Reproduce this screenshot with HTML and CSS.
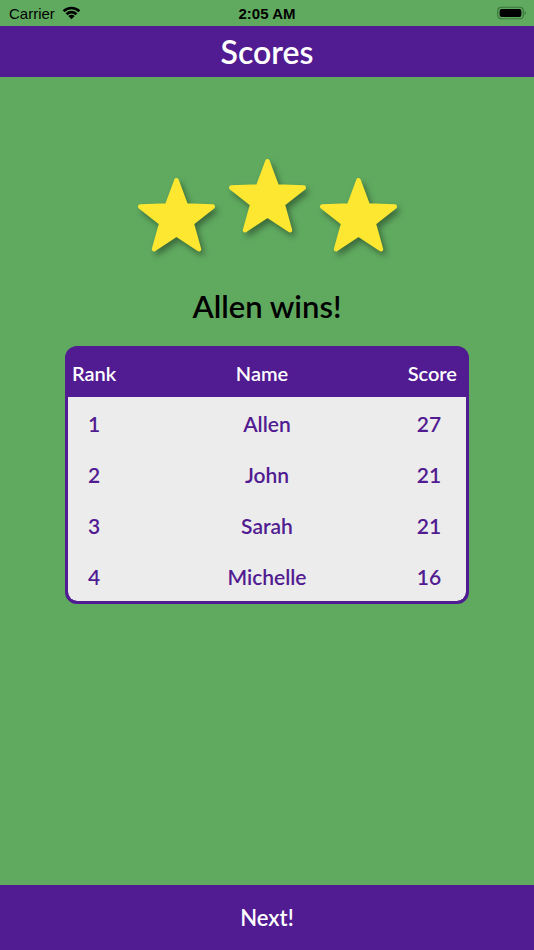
FILE: index.html
```html
<!DOCTYPE html>
<html>
<head>
<meta charset="utf-8">
<link rel="stylesheet" href="styles.css">
</head>
<body>
<div class="screen">
  <div class="status">
    <div class="status-left">
      <span class="carrier">Carrier</span>
      <svg class="wifi" width="21" height="15" viewBox="0 0 20 14">
        <path d="M10 13.4 L7 10.3 A4.3 4.3 0 0 1 13 10.3 Z" fill="#000"/>
        <path d="M4.4 7.7 A8 8 0 0 1 15.6 7.7 L13.8 9.5 A5.5 5.5 0 0 0 6.2 9.5 Z" fill="#000"/>
        <path d="M1.6 4.9 A12 12 0 0 1 18.4 4.9 L16.6 6.7 A9.4 9.4 0 0 0 3.4 6.7 Z" fill="#000"/>
      </svg>
    </div>
    <div class="time">2:05 AM</div>
    <div class="status-right">
      <svg class="battery" width="30" height="14" viewBox="0 0 30 14">
        <rect x="0.75" y="1.25" width="25.5" height="11.5" rx="3.5" fill="none" stroke="#1f4a1f" stroke-opacity="0.55" stroke-width="1.2"/>
        <rect x="2.6" y="3" width="21.8" height="8" rx="2" fill="#000"/>
        <path d="M27.6 5 Q29 5.3 29 7 Q29 8.7 27.6 9 Z" fill="#1f4a1f" fill-opacity="0.55"/>
      </svg>
    </div>
  </div>
  <div class="navbar">Scores</div>
  <div class="content">
    <div class="stars">
      <svg class="star side" viewBox="-0.55 -1 101.1 96.45"><polygon points="50,2 62.34,35.01 97.55,36.55 69.97,58.49 79.39,92.45 50,73 20.61,92.45 30.03,58.49 2.45,36.55 37.66,35.01"/></svg>
      <svg class="star" viewBox="-0.55 -1 101.1 96.45"><polygon points="50,2 62.34,35.01 97.55,36.55 69.97,58.49 79.39,92.45 50,73 20.61,92.45 30.03,58.49 2.45,36.55 37.66,35.01"/></svg>
      <svg class="star side" viewBox="-0.55 -1 101.1 96.45"><polygon points="50,2 62.34,35.01 97.55,36.55 69.97,58.49 79.39,92.45 50,73 20.61,92.45 30.03,58.49 2.45,36.55 37.66,35.01"/></svg>
    </div>
    <div class="winner">Allen wins!</div>
    <div class="table">
      <div class="thead">
        <span class="h-rank">Rank</span>
        <span class="h-name">Name</span>
        <span class="h-score">Score</span>
      </div>
      <div class="tbody">
        <div class="row"><span class="c-rank">1</span><span class="c-name">Allen</span><span class="c-score">27</span></div>
        <div class="row"><span class="c-rank">2</span><span class="c-name">John</span><span class="c-score">21</span></div>
        <div class="row"><span class="c-rank">3</span><span class="c-name">Sarah</span><span class="c-score">21</span></div>
        <div class="row"><span class="c-rank">4</span><span class="c-name">Michelle</span><span class="c-score">16</span></div>
      </div>
    </div>
  </div>
  <div class="next">Next!</div>
</div>
</body>
</html>
```
FILE: styles.css
```css
html, body {
  margin: 0;
  padding: 0;
}
body {
  width: 534px;
  height: 950px;
  overflow: hidden;
  font-family: "Lato", "Open Sans", sans-serif;
  font-weight: 600;
}
.screen {
  width: 534px;
  height: 950px;
  display: flex;
  flex-direction: column;
  background: #60aa60;
}
.status {
  height: 26px;
  display: grid;
  grid-template-columns: 1fr auto 1fr;
  align-items: center;
  font-family: "Liberation Sans", Roboto, sans-serif;
  font-weight: 400;
  font-size: 15px;
  color: #000;
}
.status-left {
  display: flex;
  align-items: center;
  gap: 6px;
  padding-left: 9px;
}
.wifi {
  display: block;
  margin-top: -2px;
}
.time {
  font-weight: 700;
  font-size: 15px;
}
.status-right {
  display: flex;
  justify-content: flex-end;
  padding-right: 7px;
}
.battery {
  display: block;
}
.navbar {
  height: 51px;
  background: #511b91;
  color: #fff;
  font-size: 32px;
  line-height: 51px;
  text-align: center;
}
.content {
  flex: 1;
  display: flex;
  flex-direction: column;
  align-items: center;
}
.stars {
  margin-top: 82px;
  display: flex;
  align-items: flex-start;
  gap: 14px;
}
.star {
  width: 77px;
  height: 73.5px;
  display: block;
  fill: #fde731;
  stroke: #fde731;
  stroke-width: 6;
  stroke-linejoin: round;
  filter: drop-shadow(3px 4px 3px rgba(0, 0, 0, 0.38));
}
.star.side {
  margin-top: 19px;
}
.winner {
  margin-top: 34px;
  height: 40px;
  line-height: 40px;
  font-size: 31px;
  color: #000;
}
.table {
  margin-top: 20px;
  width: 398px;
  border: 3px solid #511b91;
  border-radius: 12px;
  background: #511b91;
  overflow: hidden;
}
.thead {
  height: 48px;
  display: grid;
  grid-template-columns: 80px 1fr 80px;
  align-items: center;
  padding: 0 9px 0 4px;
  color: #fff;
  font-size: 20px;
}
.h-rank { text-align: left; }
.h-name { text-align: center; padding-right: 5px; }
.h-score { text-align: right; }
.tbody {
  background: #ececec;
  border-radius: 0 0 9px 9px;
}
.row {
  height: 51px;
  box-sizing: border-box;
  padding-top: 3px;
  display: grid;
  grid-template-columns: 74px 1fr 74px;
  align-items: center;
  color: #511b91;
  font-size: 21px;
}
.c-rank {
  text-align: left;
  padding-left: 20px;
}
.c-name, .c-score {
  text-align: center;
}
.next {
  height: 65px;
  background: #511b91;
  color: #fff;
  font-size: 22px;
  line-height: 65px;
  text-align: center;
}
```
